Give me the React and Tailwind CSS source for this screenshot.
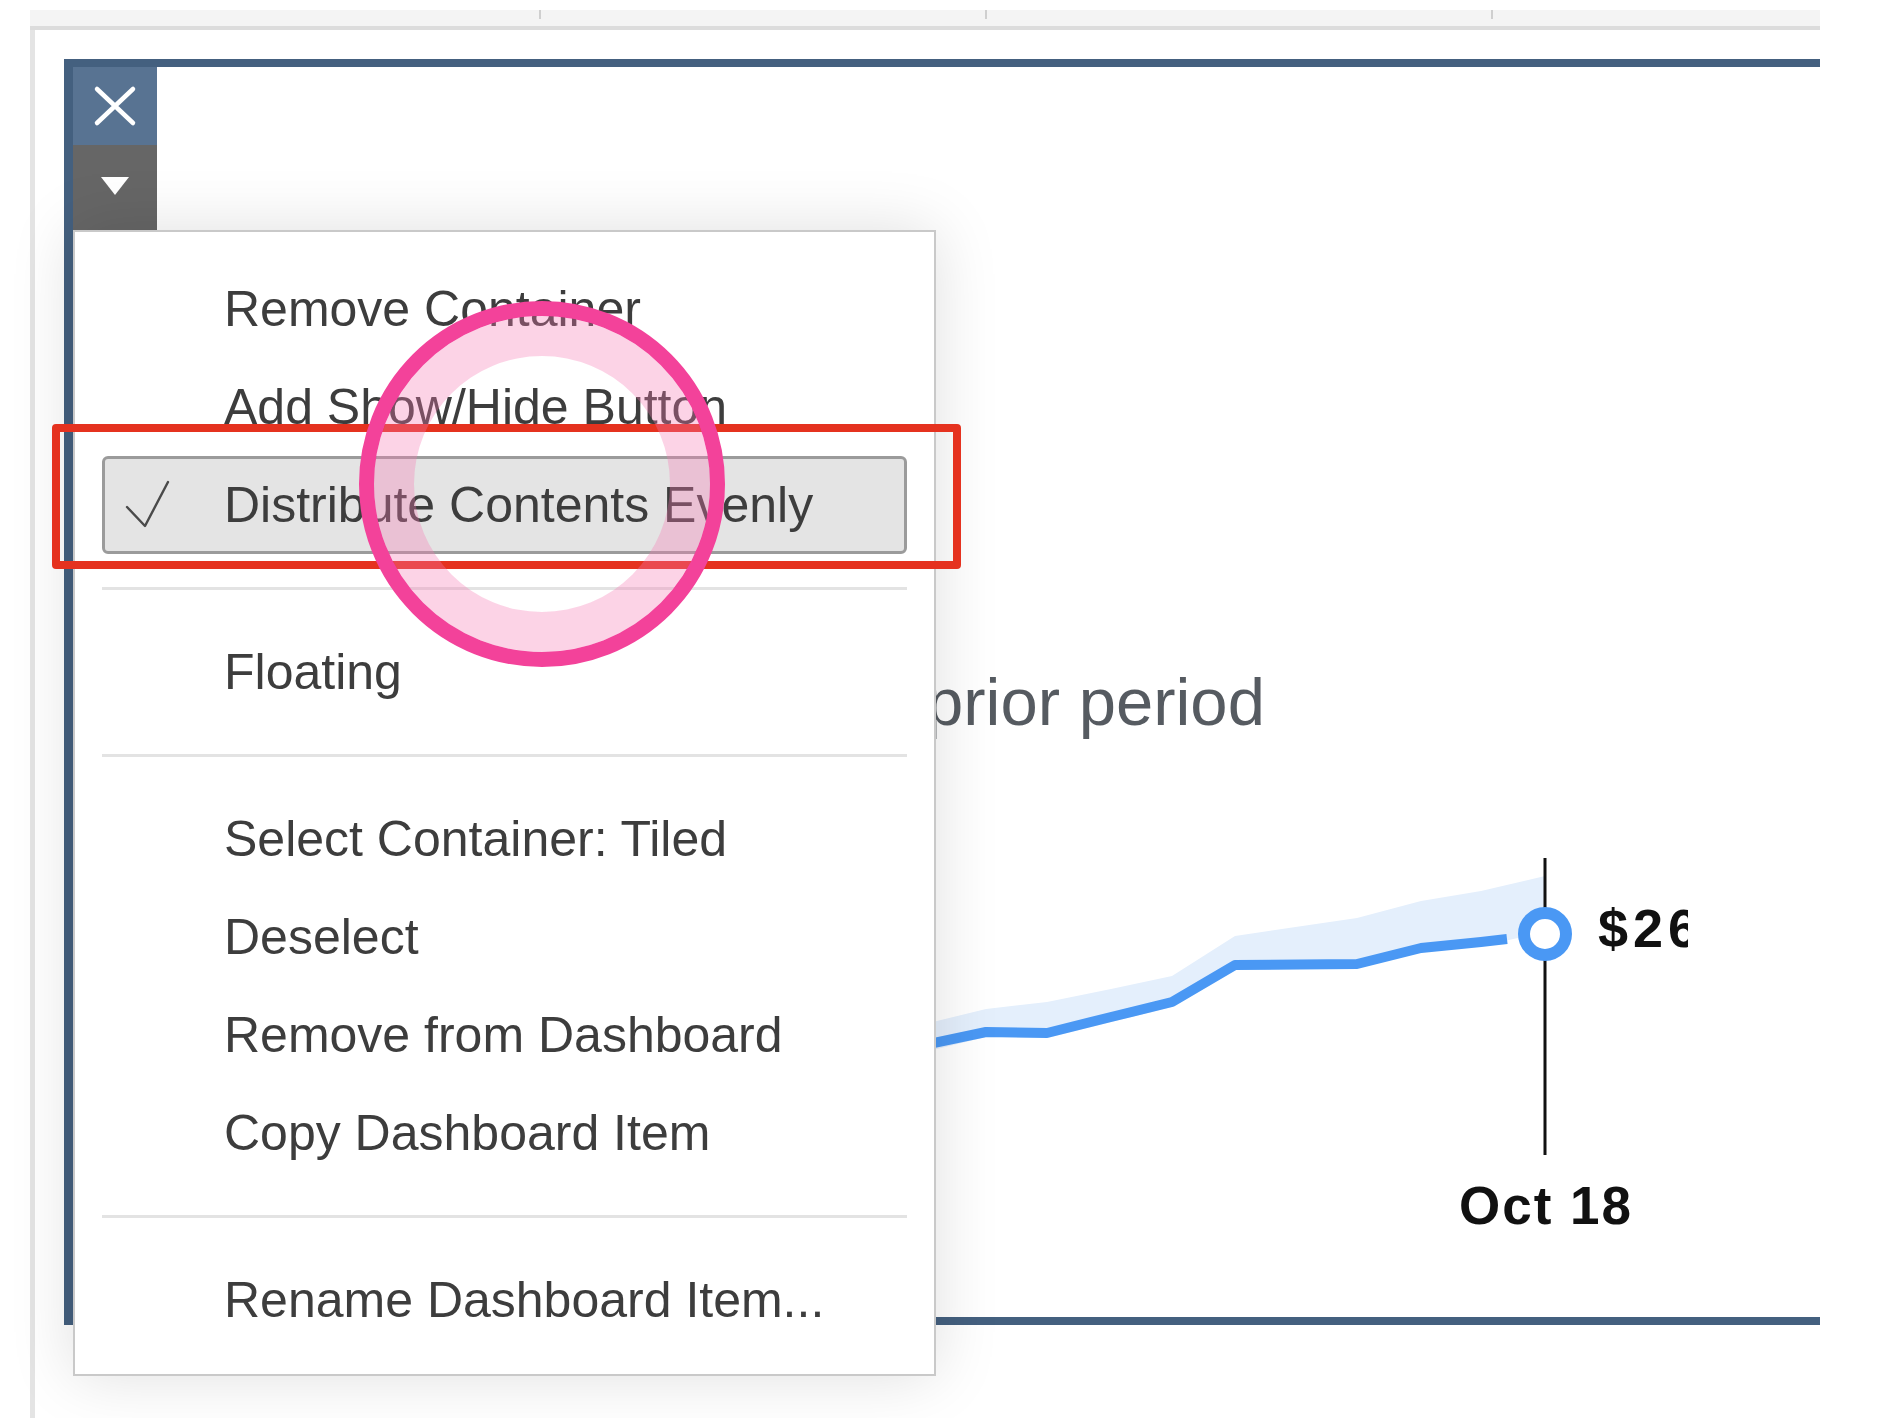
import React from "react";

// Context menu items shown over the dashboard container
const MENU_GROUPS = [
  [
    { label: "Remove Container" },
    { label: "Add Show/Hide Button" },
    { label: "Distribute Contents Evenly", checked: true },
  ],
  [{ label: "Floating" }],
  [
    { label: "Select Container: Tiled" },
    { label: "Deselect" },
    { label: "Remove from Dashboard" },
    { label: "Copy Dashboard Item" },
  ],
  [{ label: "Rename Dashboard Item..." }],
];

// sparkline coords, in the chart's own 800x340 box
const LINE = [
  [0, 210],
  [86, 192],
  [147, 193],
  [211, 177],
  [272, 162],
  [335, 125],
  [457, 124],
  [521, 108],
  [581, 102],
  [607, 99],
];

const BAND_TOP = [
  [0, 190],
  [86, 169],
  [147, 162],
  [211, 149],
  [272, 136],
  [335, 96],
  [457, 78],
  [521, 61],
  [581, 51],
  [645, 36],
];

const BAND_BOTTOM = [
  [645, 92],
  [581, 106],
  [521, 112],
  [457, 128],
  [335, 130],
  [272, 167],
  [211, 182],
  [147, 198],
  [86, 197],
  [0, 218],
];

const pts = (arr) => arr.map((p) => p.join(",")).join(" ");

const Check = () => (
  <svg width="46" height="50" viewBox="0 0 46 50" fill="none">
    <polyline
      points="2,27 20,46 43,2"
      stroke="#4a4a4a"
      strokeWidth="2.4"
      strokeLinecap="round"
      strokeLinejoin="round"
    />
  </svg>
);

const MenuItem = ({ item }) => (
  <div
    className={
      item.checked
        ? "flex h-[98px] items-center rounded-[6px] border-[3px] border-[#9b9b9b] bg-[#e4e4e4]"
        : "flex h-[98px] items-center border-[3px] border-transparent"
    }
  >
    <div className="flex w-[119px] shrink-0 items-center pl-[20px]">
      {item.checked && <Check />}
    </div>
    <span className="whitespace-nowrap text-[50px] leading-[92px] text-[#3d3d3d]">
      {item.label}
    </span>
  </div>
);

const ContextMenu = () => (
  <div className="absolute left-0 top-[163px] z-20 w-[863px] border-2 border-[#c9c9c9] bg-white px-[27px] pb-[25px] pt-[28px] shadow-[0_0_60px_rgba(0,0,0,0.13)]">
    {MENU_GROUPS.map((group, gi) => (
      <div key={gi}>
        {gi > 0 && <div className="my-[33px] h-[3px] bg-[#e3e3e3]" />}
        {group.map((item) => (
          <MenuItem key={item.label} item={item} />
        ))}
      </div>
    ))}
  </div>
);

const Sparkline = () => (
  <svg className="absolute left-[743px] top-[105px]" width="800" height="340" viewBox="0 0 800 340">
    <polygon points={pts([...BAND_TOP, ...BAND_BOTTOM])} fill="#e4effc" />
    <polyline
      points={pts(LINE)}
      fill="none"
      stroke="#4a98f4"
      strokeWidth="10"
      strokeLinejoin="round"
    />
    <line x1="645" y1="18" x2="645" y2="315" stroke="#111" strokeWidth="3" />
    <circle cx="645" cy="94" r="21" fill="#fff" stroke="#4a98f4" strokeWidth="12" />
  </svg>
);

const ZoneButtons = () => (
  <div className="flex w-[84px] shrink-0 flex-col">
    <div className="flex h-[78px] items-center justify-center bg-[#587392]">
      <svg width="44" height="42" viewBox="0 0 44 42">
        <path d="M4 4 L40 38 M40 4 L4 38" stroke="#fff" strokeWidth="4.5" strokeLinecap="round" />
      </svg>
    </div>
    <div className="flex h-[85px] items-center justify-center bg-[#666666]">
      <svg width="30" height="20" viewBox="0 0 30 20" className="-mt-[4px]">
        <polygon points="1,1 29,1 15,19" fill="#fff" />
      </svg>
    </div>
  </div>
);

export default function App() {
  return (
    <div
      className="relative h-[1418px] w-[1902px] overflow-hidden bg-white"
      style={{ fontFamily: '"Liberation Sans", Arial, sans-serif' }}
    >
      <div className="pl-[30px] pt-[10px]">
        {/* ruler strip */}
        <div className="flex h-[20px] w-[1790px] border-b-4 border-[#dcdcdc] bg-[#f4f4f4]">
          <div className="h-[9px] w-[511px] border-r-2 border-[#cfcfcf]" />
          <div className="h-[9px] w-[446px] border-r-2 border-[#cfcfcf]" />
          <div className="h-[9px] w-[506px] border-r-2 border-[#cfcfcf]" />
        </div>

        <div className="h-[1388px] border-l-[5px] border-[#e4e4e4] pl-[29px] pt-[29px]">
          {/* dashboard container */}
          <div className="relative flex h-[1266px] w-[1756px] border-b-[8px] border-l-[9px] border-t-[8px] border-[#44607f]">
            <ZoneButtons />

            {/* view content */}
            <div className="flex flex-1 flex-col">
              <div className="pl-[769px] pt-[601px] whitespace-nowrap text-[67px] leading-[67px] text-[#565b61]">
                prior period
              </div>
              <div className="relative flex-1">
                <Sparkline />
                <div className="absolute left-[1441px] top-[166px] w-[90px] overflow-hidden whitespace-nowrap text-[54px] font-bold leading-[54px] tracking-[5px] text-[#111]">
                  $26
                </div>
                <div className="absolute left-[1302px] top-[444px] whitespace-nowrap text-[53px] font-bold leading-[53px] tracking-[2px] text-[#111]">
                  Oct 18
                </div>
              </div>
            </div>

            <ContextMenu />
          </div>
        </div>
      </div>

      {/* annotations */}
      <div className="absolute left-[52px] top-[424px] z-30 h-[145px] w-[909px] rounded-[4px] border-[8px] border-[#e5321f]" />
      <div className="absolute left-[359px] top-[301px] z-30 h-[366px] w-[366px] rounded-full border-[15px] border-[#f3429a] shadow-[inset_0_0_0_40px_rgba(247,120,180,0.33)]" />
    </div>
  );
}
